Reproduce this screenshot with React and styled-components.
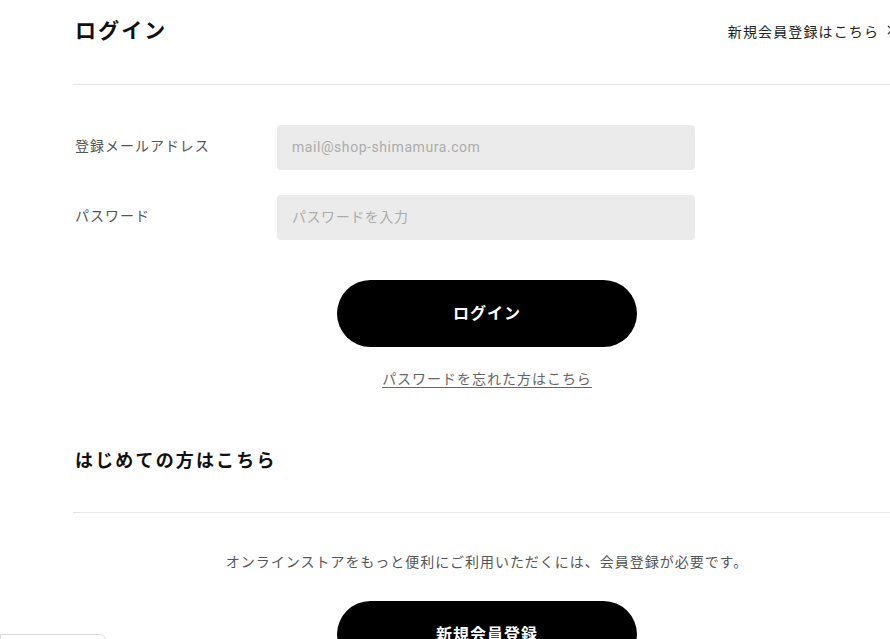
import React from "react";
import styled, { createGlobalStyle } from "styled-components";

const GlobalStyle = createGlobalStyle`
  html, body {
    margin: 0;
    padding: 0;
    background: #fff;
    overflow: hidden;
  }
  body {
    font-family: Roboto, "Noto Sans CJK JP", sans-serif;
    color: #333;
  }
  * {
    box-sizing: border-box;
  }
`;

const Page = styled.div`
  width: 828px;
  margin-left: 73px;
`;

const SectionHead = styled.div`
  display: flex;
  align-items: center;
  justify-content: space-between;
  padding-top: ${(p) => p.$top}px;
  padding-bottom: ${(p) => p.$bottom}px;
  border-bottom: 1px solid #e6e6e6;
`;

const Heading = styled.h1`
  margin: 0;
  padding-left: 2px;
  font-size: ${(p) => p.$size}px;
  line-height: 28px;
  font-weight: 700;
  letter-spacing: ${(p) => p.$spacing}em;
  color: #111;
`;

const HeadLink = styled.a`
  display: flex;
  align-items: center;
  gap: 7px;
  padding-right: 5px;
  font-size: 14px;
  letter-spacing: 0.08em;
  color: #222;
  text-decoration: none;
  svg {
    margin-top: -3px;
  }
`;

const Form = styled.form`
  padding-top: 40px;
  display: flex;
  flex-direction: column;
`;

const Row = styled.div`
  display: flex;
  align-items: center;
  margin-bottom: 25px;
`;

const Label = styled.label`
  width: 204px;
  padding-left: 2px;
  margin-top: -4px;
  font-size: 14px;
  line-height: 20px;
  letter-spacing: 0.07em;
  color: #555;
`;

const Input = styled.input`
  width: 418px;
  height: 45px;
  border: 0;
  border-radius: 4px;
  background: #ebebeb;
  padding: 0 15px 2px;
  font-family: Roboto, "Noto Sans CJK JP", sans-serif;
  font-size: 14px;
  letter-spacing: 0.04em;
  color: #333;
  outline: none;

  &::placeholder {
    color: #ababab;
  }
`;

const Center = styled.div`
  display: flex;
  flex-direction: column;
  align-items: center;
  margin-top: ${(p) => p.$top || 0}px;
`;

const PillButton = styled.button`
  width: 300px;
  height: 67px;
  border: 0;
  border-radius: 34px;
  background: #000;
  color: #fff;
  padding-bottom: 4px;
  font-family: "Noto Sans CJK JP", sans-serif;
  font-size: 16px;
  font-weight: 700;
  letter-spacing: 0.06em;
  cursor: pointer;
`;

const TextLink = styled.a`
  margin-top: 22px;
  font-size: 14px;
  line-height: 20px;
  letter-spacing: 0.07em;
  color: #666;
  text-decoration: underline;
  text-underline-offset: 3px;
`;

const Note = styled.p`
  margin: 39px 0 29px;
  font-size: 14px;
  line-height: 20px;
  letter-spacing: 0.07em;
  color: #555;
  text-align: center;
`;

const Corner = styled.div`
  position: fixed;
  left: 0;
  bottom: -35px;
  width: 106px;
  height: 40px;
  background: #fff;
  border: 1px solid #dcdcdc;
  border-radius: 0 6px 0 0;
`;

const Chevron = () => (
  <svg width="10" height="10" viewBox="0 0 10 10" fill="none">
    <path d="M2 1l4 4-4 4" stroke="#333" strokeWidth="1.2" />
  </svg>
);

export default function App() {
  return (
    <>
      <GlobalStyle />
      <Page>
        <SectionHead $top={17} $bottom={39}>
          <Heading $size={21} $spacing={0.1}>
            ログイン
          </Heading>
          <HeadLink href="#">
            新規会員登録はこちら
            <Chevron />
          </HeadLink>
        </SectionHead>

        <Form onSubmit={(e) => e.preventDefault()}>
          <Row>
            <Label>登録メールアドレス</Label>
            <Input type="email" placeholder="mail@shop-shimamura.com" />
          </Row>
          <Row>
            <Label>パスワード</Label>
            <Input type="password" placeholder="パスワードを入力" />
          </Row>
          <Center $top={15}>
            <PillButton type="submit">ログイン</PillButton>
            <TextLink href="#">パスワードを忘れた方はこちら</TextLink>
          </Center>
        </Form>

        <SectionHead $top={58} $bottom={37}>
          <Heading $size={18} $spacing={0.12}>
            はじめての方はこちら
          </Heading>
        </SectionHead>

        <Note>
          オンラインストアをもっと便利にご利用いただくには、会員登録が必要です。
        </Note>
        <Center>
          <PillButton type="button">新規会員登録</PillButton>
        </Center>
      </Page>
      <Corner />
    </>
  );
}
